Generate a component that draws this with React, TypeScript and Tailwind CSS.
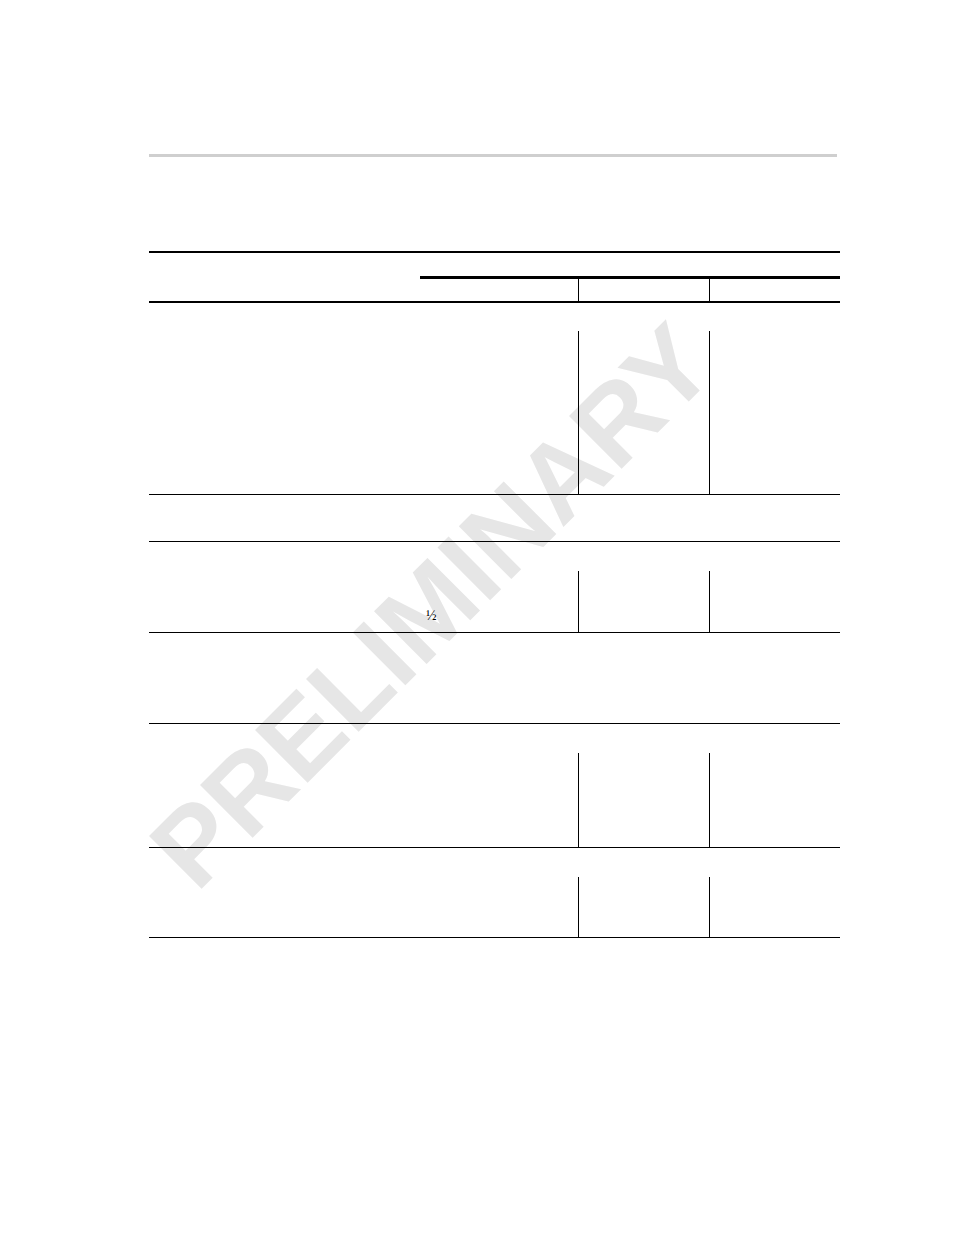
import React from "react"

type SectionProps = {
  headH?: string
  bodyH: string
  split?: boolean
  children?: React.ReactNode
}

function Section({ headH, bodyH, split = true, children }: SectionProps) {
  return (
    <div className="flex flex-col border-b border-black">
      {headH && <div className={headH} />}
      {split ? (
        <div className={`flex ${bodyH}`}>
          <div className="w-[429px] relative">{children}</div>
          <div className="w-[131px] border-l border-black" />
          <div className="w-[131px] border-l border-black" />
        </div>
      ) : (
        <div className={bodyH} />
      )}
    </div>
  )
}

export default function App() {
  return (
    <div className="relative w-[954px] h-[1235px] bg-white overflow-hidden">
      {/* watermark */}
      <div className="absolute left-[432px] top-[606px] -translate-x-1/2 -translate-y-1/2 -rotate-45 whitespace-nowrap text-[108px] leading-none font-bold text-[#e6e6e6] font-['Liberation_Sans',Arial,sans-serif] select-none">
        PRELIMINARY
      </div>

      <div className="relative ml-[149px] w-[691px] flex flex-col">
        <div className="mt-[154px] h-[3px] w-[688px] bg-[#cfcfcf]" />

        {/* table */}
        <div className="mt-[94px] border-t-2 border-black flex flex-col">
          <div className="h-[23px]" />
          <div className="flex h-[27px] border-b-2 border-black">
            <div className="w-[271px]" />
            <div className="w-[158px] border-t-[3px] border-black" />
            <div className="w-[131px] border-t-[3px] border-l border-black" />
            <div className="w-[131px] border-t-[3px] border-l border-black" />
          </div>

          <Section headH="h-[28px]" bodyH="h-[163px]" />
          <Section bodyH="h-[46px]" split={false} />
          <Section headH="h-[29px]" bodyH="h-[61px]">
            <span className="absolute left-[277px] top-[38px] text-[14px] leading-[14px] text-black font-['Liberation_Serif','Times_New_Roman',serif]">
              ½
            </span>
          </Section>
          <Section bodyH="h-[90px]" split={false} />
          <Section headH="h-[29px]" bodyH="h-[94px]" />
          <Section headH="h-[29px]" bodyH="h-[60px]" />
        </div>
      </div>
    </div>
  )
}
